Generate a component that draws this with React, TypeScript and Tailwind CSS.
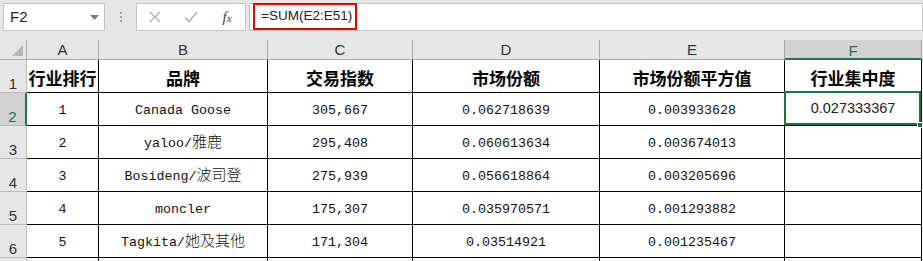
import type { ReactNode } from "react";

type Row = [string, string, string, string, string];

const rows: Row[] = [
  ["1", "Canada Goose", "305,667", "0.062718639", "0.003933628"],
  ["2", "yaloo/雅鹿", "295,408", "0.060613634", "0.003674013"],
  ["3", "Bosideng/波司登", "275,939", "0.056618864", "0.003205696"],
  ["4", "moncler", "175,307", "0.035970571", "0.001293882"],
  ["5", "Tagkita/她及其他", "171,304", "0.03514921", "0.001235467"],
];

const headers = ["行业排行", "品牌", "交易指数", "市场份额", "市场份额平方值", "行业集中度"];
const letters = ["A", "B", "C", "D", "E", "F"];

// split ascii / cjk so the ascii part keeps the half-width look of SimSun
function Mixed({ text }: { text: string }) {
  const parts = text.split(/([\u4e00-\u9fff]+)/).filter(Boolean);
  return (
    <span className="whitespace-pre">
      {parts.map((p, i) =>
        /[\u4e00-\u9fff]/.test(p) ? (
          <span key={i} className="font-['Noto_Sans_CJK_SC',sans-serif] text-[15px] font-light">
            {p}
          </span>
        ) : (
          <span key={i} className="font-['Liberation_Mono',monospace] text-[13.33px]">
            {p}
          </span>
        ),
      )}
    </span>
  );
}

function RowHead({ n, active }: { n?: string; active?: boolean }) {
  return (
    <div
      className={
        active
          ? "flex items-end justify-center border-r-2 border-b border-r-[#217346] border-b-[#bdbdbd] bg-[#d2d2d2] pb-[1px] text-[15px] leading-none text-[#217346]"
          : "flex items-end justify-center border-r border-b border-[#bdbdbd] bg-[#e6e6e6] pb-[1px] text-[15px] leading-none text-[#333]"
      }
    >
      {n}
    </div>
  );
}

function Cell({ children }: { children?: ReactNode }) {
  return (
    <div className="flex items-center justify-center border-r border-b border-black bg-white text-[#111]">{children}</div>
  );
}

export default function App() {
  return (
    <div className="h-[261px] w-[923px] overflow-hidden bg-[#e6e6e6] font-['Liberation_Sans',sans-serif]">
      {/* formula bar */}
      <div className="flex h-[40px] items-start pl-[3px] pt-[3px]">
        <div className="flex h-[28px] w-[102px] items-center justify-between border border-[#c6c6c6] bg-white pl-[6px] pr-[5px] text-[15px] text-[#222]">
          <span>F2</span>
          <svg width="9" height="5" viewBox="0 0 9 5">
            <path d="M0 0h9L4.5 5z" fill="#7a7a7a" />
          </svg>
        </div>
        <div className="flex h-[28px] w-[31px] flex-col items-center justify-center gap-[2px]">
          <span className="h-[2px] w-[2px] bg-[#a0a0a0]" />
          <span className="h-[2px] w-[2px] bg-[#a0a0a0]" />
          <span className="h-[2px] w-[2px] bg-[#a0a0a0]" />
        </div>
        <div className="grid h-[28px] w-[110px] grid-cols-3 items-center justify-items-center border border-[#c6c6c6] bg-white">
          <svg width="12" height="12" viewBox="0 0 12 12">
            <path d="M1 1l10 10M11 1L1 11" stroke="#b0b0b0" strokeWidth="1.4" />
          </svg>
          <svg width="14" height="12" viewBox="0 0 14 12">
            <path d="M1 6.5l4 4L13 1" stroke="#b0b0b0" strokeWidth="1.6" fill="none" />
          </svg>
          <span className="font-['Liberation_Serif',serif] text-[15px] italic leading-none text-[#444]">
            f<span className="text-[11px]">x</span>
          </span>
        </div>
        <div className="ml-[3px] flex h-[28px] flex-1 items-start border border-[#c6c6c6] bg-white pl-[3px]">
          <div className="-mt-px flex h-[27px] w-[104px] items-center border-2 border-[#e60000] pl-[6px] text-[13.5px] text-[#222]">
            =SUM(E2:E51)
          </div>
        </div>
      </div>

      {/* sheet */}
      <div className="grid grid-cols-[27px_72px_169px_145px_187px_185px_137px_1fr] grid-rows-[20px_33px_33px_33px_33px_33px_33px_33px]">
        <div className="flex items-end justify-end border-r border-b border-[#ababab] bg-[#e6e6e6] pb-[3px] pr-[3px]">
          <svg width="11" height="11" viewBox="0 0 11 11">
            <path d="M11 0v11H0z" fill="#b4b4b4" />
          </svg>
        </div>
        {letters.map((l) =>
          l === "F" ? (
            <div
              key={l}
              className="flex items-end justify-center border-r border-b-2 border-r-[#ababab] border-b-[#217346] bg-[#d2d2d2] text-[15px] leading-none text-[#217346]"
            >
              {l}
            </div>
          ) : (
            <div
              key={l}
              className="flex items-end justify-center border-r border-b border-[#ababab] bg-[#e6e6e6] pb-[2px] text-[15px] leading-none text-[#333]"
            >
              {l}
            </div>
          ),
        )}
        <div className="border-b border-[#ababab] bg-[#e6e6e6]" />

        <RowHead n="1" />
        {headers.map((h) => (
          <div
            key={h}
            className="flex items-center justify-center border-r border-b border-black bg-white pt-[3px] font-['Noto_Sans_CJK_SC',sans-serif] text-[17px] font-bold text-black"
          >
            {h}
          </div>
        ))}
        <div className="bg-white" />

        {rows.map((r, i) => (
          <div key={r[0]} className="contents">
            <RowHead n={String(i + 2)} active={i === 0} />
            {r.map((v, j) => (
              <Cell key={j}>
                <Mixed text={v} />
              </Cell>
            ))}
            {i === 0 ? (
              <div className="relative flex items-center justify-center border-r border-b border-black bg-white text-[14.5px] text-[#222]">
                0.027333367
                <div className="absolute -left-px -top-[2px] right-0 bottom-0 border-2 border-[#217346]" />
                <div className="absolute -right-[2px] -bottom-[3px] h-[6px] w-[6px] border border-white bg-[#217346]" />
              </div>
            ) : (
              <Cell />
            )}
            <div className="bg-white" />
          </div>
        ))}

        <RowHead />
        {letters.map((l) => (
          <Cell key={l} />
        ))}
        <div className="bg-white" />
      </div>
    </div>
  );
}
